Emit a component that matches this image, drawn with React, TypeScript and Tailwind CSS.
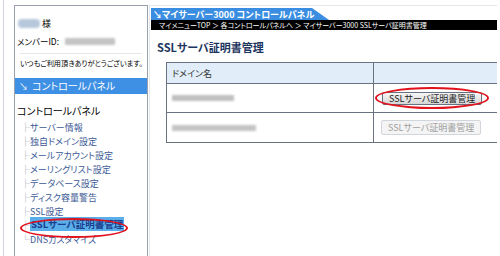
import React from "react";

const font = { fontFamily: '"Noto Sans CJK JP", "Noto Sans", sans-serif' };

function Item({ label, active }: { label: string; active?: boolean }) {
  return (
    <div className="h-[14px] flex items-center pl-[6px] text-[9px] leading-none">
      <span className="text-gray-400 w-[9px] text-[9px]">{active ? "├" : label === "DNSカスタマイズ" ? "└" : "├"}</span>
      {active ? (
        <span className="relative">
          <span className="bg-[#5aaeea] text-[#1b3f8f] font-bold text-[9.5px] px-[1px]">{label}</span>
        </span>
      ) : (
        <span className="text-[#3d5a96]">{label}</span>
      )}
    </div>
  );
}

export default function App() {
  const items = [
    "サーバー情報",
    "独自ドメイン設定",
    "メールアカウント設定",
    "メーリングリスト設定",
    "データベース設定",
    "ディスク容量警告",
    "SSL設定",
  ];
  return (
    <div
      className="relative w-[500px] h-[256px] bg-white overflow-hidden flex [font-feature-settings:'palt']"
      style={font}
    >
      {/* Left column */}
      <div className="w-[150px] h-full pl-[3px]">
        <div className="h-full border-l border-gray-300 pl-[10px] pt-[5px]">
          <div className="w-[134px] h-full border border-b-0 border-gray-400 flex flex-col">
            <div className="h-[12px] mt-[11px] flex items-center pl-[3px] gap-[2px]">
              <span className="w-[22px] h-[9px] bg-[#b8c8dc] blur-[1px] rounded-sm" />
              <span className="text-[9px] text-black leading-none">様</span>
            </div>
            <div className="h-[12px] mt-[6px] flex items-center pl-[2px] gap-[6px]">
              <span className="text-[8.5px] text-black leading-none">メンバーID:</span>
              <span className="w-[50px] h-[7px] bg-[#c4c4c4] blur-[1px]" />
            </div>
            <div className="mx-[5px] mt-[6px] border-t border-gray-200" />
            <div className="mt-[5px] pl-[5px] text-[7.2px] text-black leading-none h-[10px] flex items-center whitespace-nowrap">
              いつもご利用頂きありがとうございます。
            </div>
            <div className="mt-[9px] h-[16px] bg-[#3e90e4] flex items-center pl-[4px] text-white text-[10px] leading-none whitespace-nowrap">
              <span className="text-[9px] mr-[4px]">↘</span>コントロールパネル
            </div>
            <div className="mt-[11px] pl-[2px] text-[10px] text-black leading-none h-[12px] flex items-center">
              コントロールパネル
            </div>
            <div className="mt-[3px] flex flex-col">
              {items.map((l) => (
                <Item key={l} label={l} />
              ))}
              <Item label="SSLサーバ証明書管理" active />
              <Item label="DNSカスタマイズ" />
            </div>
          </div>
        </div>
      </div>

      {/* Right column */}
      <div className="flex-1 h-full pt-[5px] pr-[3px]">
        <div className="h-full border-t border-l border-gray-200 pl-[1px] pt-[2px]">
          <div className="h-[12px] w-[178px] bg-[#3a8de0] [clip-path:polygon(0_0,161px_0,178px_100%,0_100%)] flex items-center pl-[2px] text-white font-bold text-[9px] leading-none whitespace-nowrap">
            ↘マイサーバー3000 コントロールパネル
          </div>
          <div className="h-[10px] bg-black flex items-center pl-[8px] text-white text-[7px] leading-none whitespace-nowrap">
            マイメニューTOP ＞ 各コントロールパネルへ ＞ マイサーバー3000 SSLサーバ証明書管理
          </div>
          <div className="mt-[10px] pl-[6px] h-[14px] flex items-center text-[11px] font-bold text-[#1c355e] leading-none">
            SSLサーバ証明書管理
          </div>
          <div className="mt-[8px] ml-[15px] w-[331px] border border-gray-500 border-r-0">
            <div className="flex h-[21px] bg-[#e1edf9] border-b border-gray-500">
              <div className="w-[207px] border-r border-gray-500 flex items-center pl-[5px] text-[9px] text-[#333] leading-none">
                ドメイン名
              </div>
              <div className="flex-1" />
            </div>
            <div className="flex h-[29px] border-b border-gray-500">
              <div className="w-[207px] border-r border-gray-500 flex items-center pl-[5px]">
                <span className="w-[62px] h-[6px] bg-[#c0c0c0] blur-[1px]" />
              </div>
              <div className="flex-1 flex items-center pl-[8px]">
                <div className="h-[13px] px-[6px] flex items-center border border-gray-500 rounded-[2px] bg-gradient-to-b from-[#f6f6f6] to-[#d6d6d6] text-[9px] text-[#222] leading-none whitespace-nowrap">
                  SSLサーバ証明書管理
                </div>
              </div>
            </div>
            <div className="flex h-[29px]">
              <div className="w-[207px] border-r border-gray-500 flex items-center pl-[5px]">
                <span className="w-[84px] h-[6px] bg-[#c4c4c4] blur-[1px]" />
              </div>
              <div className="flex-1 flex items-center pl-[7px]">
                <div className="h-[15px] px-[6px] flex items-center border border-gray-300 rounded-[2px] bg-[#f4f4f4] text-[9px] text-[#a0a0a0] leading-none whitespace-nowrap">
                  SSLサーバ証明書管理
                </div>
              </div>
            </div>
          </div>
        </div>
      </div>

      {/* Red ellipses */}
      <div className="absolute left-[20px] top-[218px] w-[108px] h-[20px] rounded-[50%] border-2 border-[#e0121b]" />
      <div className="absolute left-[375px] top-[87px] w-[114px] h-[22px] rounded-[50%] border-2 border-[#e0121b]" />
    </div>
  );
}
